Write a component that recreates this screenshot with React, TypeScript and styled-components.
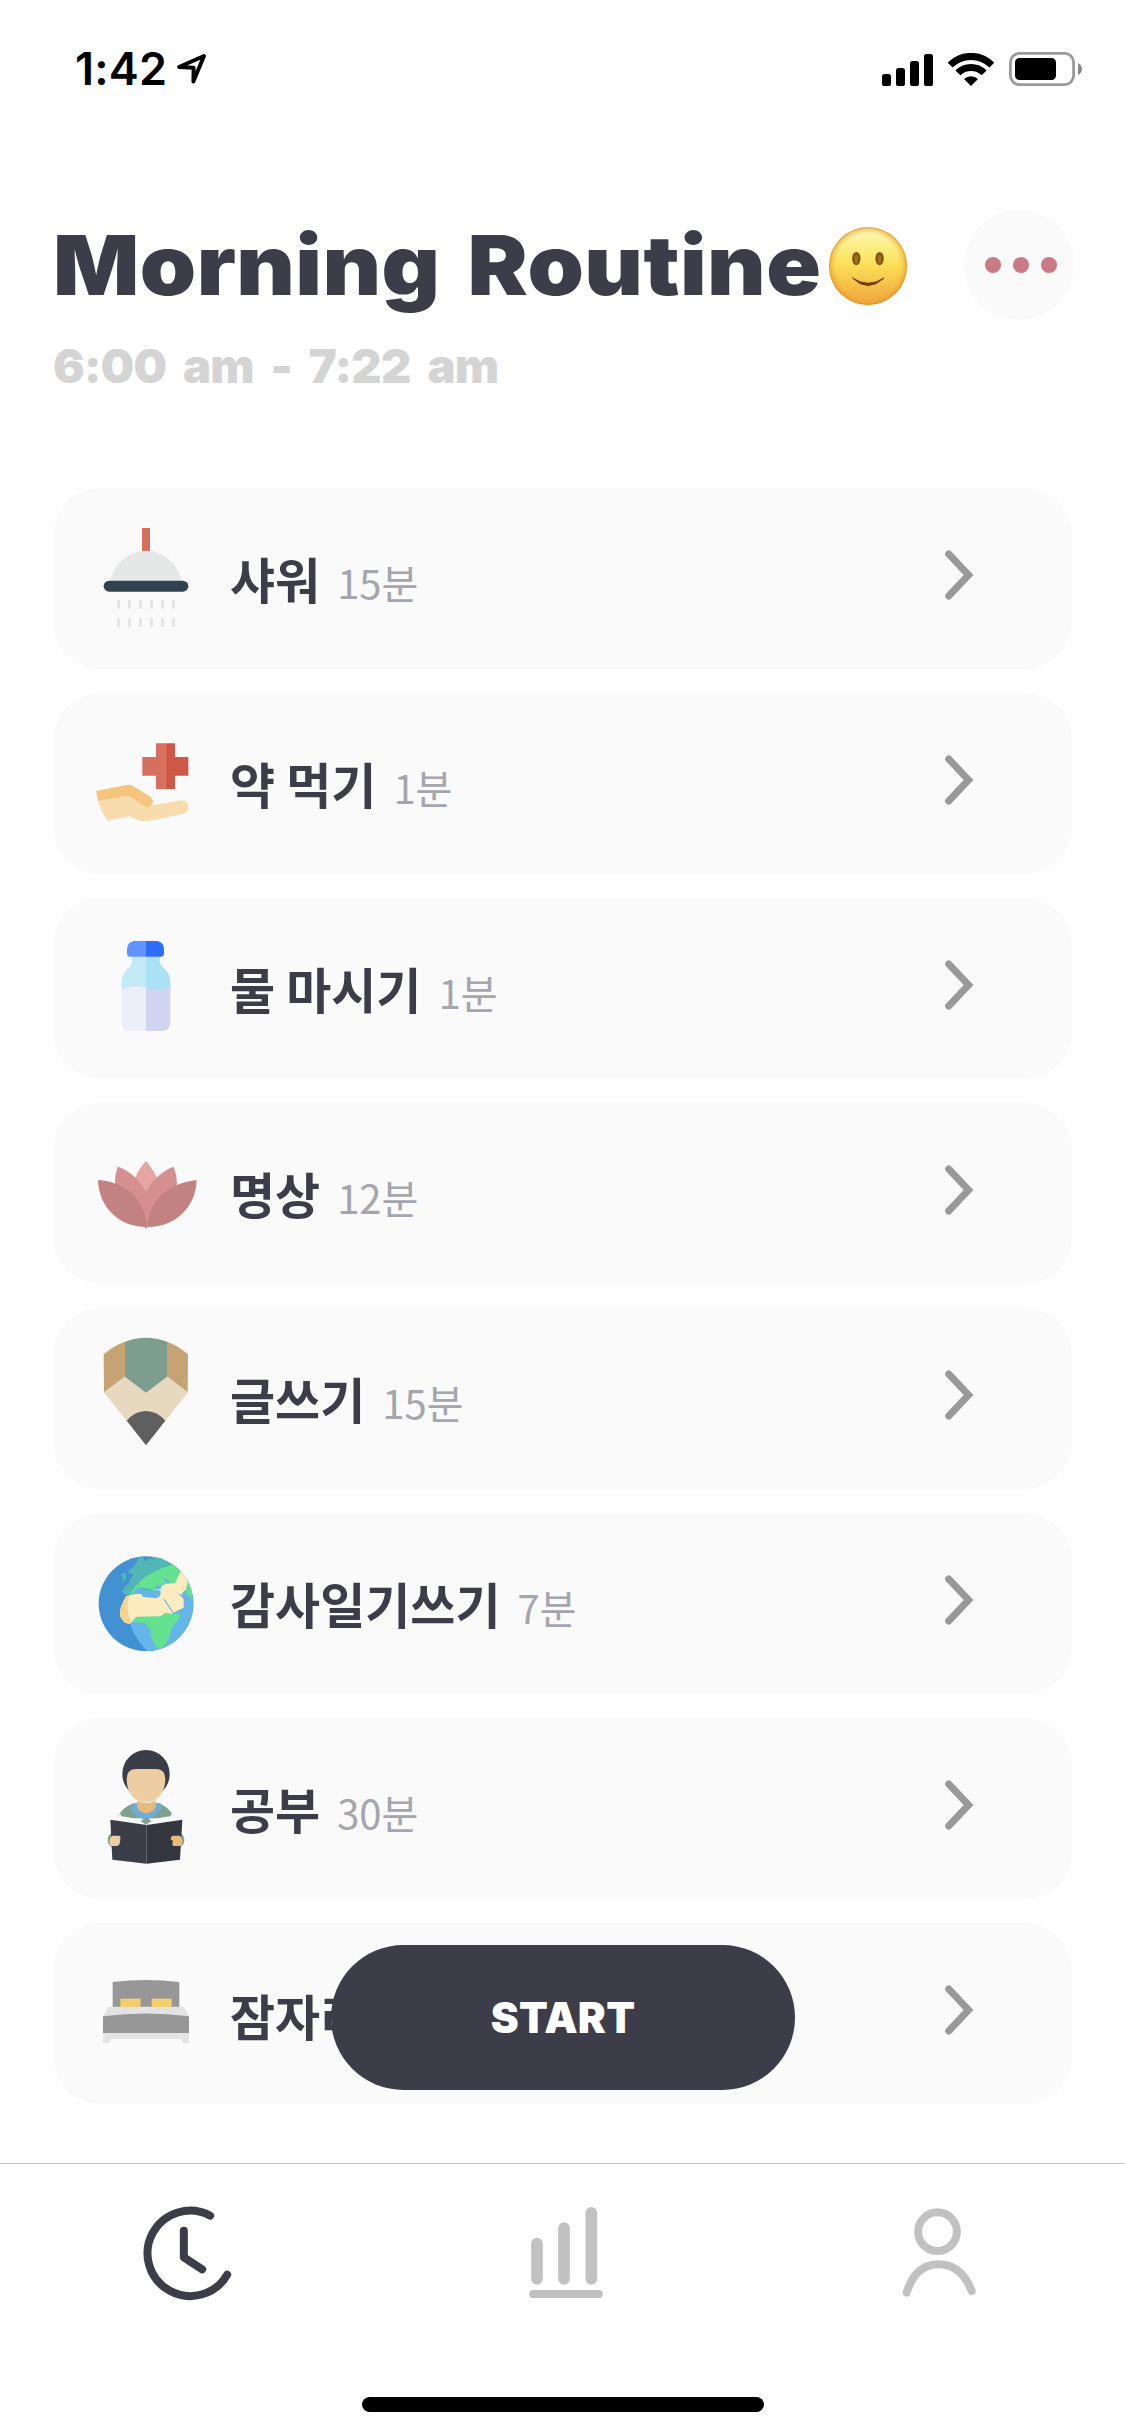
import React from 'react';
import styled, { createGlobalStyle } from 'styled-components';

const ink = '#3c3d49';
const soft = '#c1c1c1';
const panel = '#fafafa';

const GlobalStyle = createGlobalStyle`
  * { box-sizing: border-box; }
  body {
    margin: 0;
    background: #fefefe;
    font-family: Inter, "Noto Sans CJK KR", sans-serif;
  }
  svg { display: block; flex: none; }
`;

const Screen = styled.div`
  width: 1125px;
  height: 2436px;
  display: flex;
  flex-direction: column;
  overflow: hidden;
  color: ${ink};
`;

const StatusBar = styled.header`
  height: 132px;
  flex: none;
  padding: 44px 43px 0 75px;
  display: flex;
  align-items: flex-start;
  justify-content: space-between;
  color: #000;
`;

const StatusGroup = styled.div<{ $gap: number }>`
  display: flex;
  align-items: center;
  height: 50px;
  gap: ${(p) => p.$gap}px;
`;

const Clock = styled.span`
  width: 93px;
  font-size: 45px;
  font-weight: 600;
  line-height: 50px;
  letter-spacing: 0.2px;
  white-space: nowrap;
`;

const Heading = styled.section`
  height: 356px;
  flex: none;
  padding: 78px 51px 0 53px;
`;

const TitleRow = styled.div`
  display: flex;
  align-items: center;
  height: 110px;
`;

const Title = styled.h1`
  margin: 0;
  width: 775px;
  font-size: 83px;
  font-weight: 900;
  line-height: 112px;
  letter-spacing: 0.4px;
  word-spacing: 8px;
  white-space: nowrap;
  transform: scaleX(1.088);
  transform-origin: left center;
`;

const MoreButton = styled.button`
  width: 110px;
  height: 110px;
  margin-left: auto;
  padding: 0 0 0 4px;
  border: 0;
  border-radius: 50%;
  background: ${panel};
  display: flex;
  align-items: center;
  justify-content: center;
  gap: 12px;
`;

const Dot = styled.span`
  width: 16px;
  height: 16px;
  border-radius: 50%;
  background: #c97b85;
`;

const TimeRange = styled.p`
  margin: 18px 0 0;
  font-size: 47px;
  font-weight: 900;
  line-height: 56px;
  letter-spacing: -0.7px;
  word-spacing: 8px;
  color: #d4d4d4;
  white-space: nowrap;
`;

const List = styled.main`
  flex: none;
  height: 1675px;
  padding: 0 53px;
  display: flex;
  flex-direction: column;
  gap: 24px;
  position: relative;
`;

const Card = styled.article`
  height: 181px;
  flex: none;
  padding: 0 98px 0 37px;
  border-radius: 48px;
  background: ${panel};
  display: flex;
  align-items: center;
`;

const Label = styled.div`
  margin-left: 28px;
  padding-top: 2px;
  flex: 1;
  display: flex;
  align-items: baseline;
  gap: 17px;
  font-family: "Noto Sans CJK KR", sans-serif;
  line-height: 70px;
  white-space: nowrap;
`;

const Name = styled.span`
  font-size: 49px;
  font-weight: 700;
`;

const Minutes = styled.span`
  font-size: 40px;
  font-weight: 400;
  color: #a5a5ad;
`;

const StartButton = styled.button`
  position: absolute;
  left: 331px;
  top: 1457px;
  width: 464px;
  height: 145px;
  padding: 0;
  border: 0;
  border-radius: 73px;
  background: ${ink};
  color: #fff;
  font-family: Inter, sans-serif;
  font-size: 42px;
  font-weight: 900;
  letter-spacing: 0.3px;
`;

const TabBar = styled.nav`
  height: 234px;
  flex: none;
  border-top: 1px solid #c6c6c6;
  display: grid;
  grid-template-columns: repeat(3, 1fr);
  justify-items: center;
  padding-top: 26px;
`;

const HomeIndicator = styled.div`
  width: 402px;
  height: 15px;
  flex: none;
  margin: 0 auto;
  border-radius: 8px;
  background: #000;
`;

const LocationArrow = () => (
  <svg width="34" height="36" viewBox="175 51 34 36" fill="none" stroke="#000" strokeWidth="3.9" strokeLinejoin="round">
    <path d="M204 56 L179 67 L193.6 67.8 L193.4 81.5 Z" />
  </svg>
);

const Signal = () => (
  <svg width="51" height="33" viewBox="0 0 51 33">
    <rect x="0" y="21" width="9" height="12" rx="2.6" />
    <rect x="14" y="15" width="9" height="18" rx="2.6" />
    <rect x="28" y="8" width="9" height="25" rx="2.6" />
    <rect x="42" y="1" width="9" height="32" rx="2.6" />
  </svg>
);

const Wifi = () => (
  <svg width="46" height="33" viewBox="0 0 46 33" fill="none" stroke="#000" strokeWidth="7">
    <path d="M2.1 12.1 A29.5 29.5 0 0 1 43.9 12.1" />
    <path d="M9.9 19.9 A18.5 18.5 0 0 1 36.1 19.9" />
    <path d="M16 26 A10 10 0 0 1 30 26 L23 33 Z" fill="#000" stroke="none" />
  </svg>
);

const Battery = () => (
  <svg width="73" height="34" viewBox="0 0 73 34">
    <rect x="1.4" y="1.4" width="63.2" height="31.2" rx="9" fill="none" stroke="#9a9a9a" strokeWidth="2.8" />
    <rect x="6" y="6" width="41" height="22" rx="4.5" />
    <path d="M69 11 Q73 13 73 17 Q73 21 69 23 Z" fill="#8a8a8a" />
  </svg>
);

const Smiley = () => (
  <svg width="80" height="80" viewBox="0 -1 80 80">
    <defs>
      <linearGradient id="faceFill" x1="0" y1="0" x2="0" y2="1">
        <stop offset="0" stopColor="#fff8c8" />
        <stop offset="0.22" stopColor="#fdf08a" />
        <stop offset="0.5" stopColor="#fbde56" />
        <stop offset="0.78" stopColor="#f4bc46" />
        <stop offset="1" stopColor="#efa640" />
      </linearGradient>
      <radialGradient id="faceRim" cx="0.5" cy="0.5" r="0.5">
        <stop offset="0.82" stopColor="#eb9f2c" stopOpacity="0" />
        <stop offset="0.94" stopColor="#ea9f2c" stopOpacity="0.45" />
        <stop offset="1" stopColor="#dc8a20" stopOpacity="0.85" />
      </radialGradient>
    </defs>
    <circle cx="40" cy="40" r="39" fill="url(#faceFill)" />
    <circle cx="40" cy="40" r="39" fill="url(#faceRim)" />
    <ellipse cx="28.3" cy="32.6" rx="4.2" ry="6.7" fill="#80540f" />
    <ellipse cx="51.6" cy="32.6" rx="4.2" ry="6.7" fill="#80540f" />
    <ellipse cx="28.3" cy="33" rx="2" ry="4.6" fill="#a06e1c" />
    <ellipse cx="51.6" cy="33" rx="2" ry="4.6" fill="#a06e1c" />
    <path d="M24.5 52 Q40 67 56 52 Q40 62.5 24.5 52 Z" fill="#6e3d08" stroke="#6e3d08" strokeWidth="1" strokeLinejoin="round" />
  </svg>
);

const Shower = () => (
  <>
    <rect x="306" y="174" width="24" height="69" fill="#d5705e" />
    <path d="M211 333 C222 280 268 242 318 242 C368 242 414 280 425 333 Z" fill="#e6e8e7" />
    <rect x="191" y="332" width="254" height="33" rx="16.5" fill="#304250" />
    {[235, 268, 301, 334, 367, 400].map((x) => (
      <g key={x} fill="#e4e5e5">
        <rect x={x - 4} y="389" width="9" height="27" rx="3" />
        <rect x={x - 4} y="444" width="9" height="27" rx="3" />
      </g>
    ))}
  </>
);

const Medicine = () => (
  <>
    <path d="M348 820 H376 V957 H348 V917 H307 V861 H348 Z" fill="#d5705e" />
    <path d="M376 820 H405 V861 H445 V917 H405 V957 H376 Z" fill="#cd5845" />
    <path d="M174 992 L262 974 L322 1006 Q332 1008 342 1005 L424 991 Q443 990 445 1010 Q445 1027 428 1032 L330 1052 Q306 1057 288 1048 L267 1039 L203 1052 Q184 1028 174 992 Z" fill="#f9dcae" />
    <path d="M168 963 L258 945 Q268 943 278 947 L331 980 Q342 988 338 999 Q331 1013 317 1010 L265 977 L174 993 Z" fill="#f6c57d" />
  </>
);

const Bottle = () => (
  <>
    <path d="M276 199 H318 V300 H245 V270 Q247 252 261 238 Q276 226 276 215 Z" fill="#c4e9f7" />
    <path d="M318 199 H359 V215 Q361 226 375 238 Q391 254 391 275 V302 H318 Z" fill="#aae1f4" />
    <path d="M245 300 Q281 280 318 294 V423 H267 Q245 420 245 398 Z" fill="#eceff9" />
    <path d="M318 294 Q357 308 391 289 V398 Q389 421 367 423 H318 Z" fill="#d0d4ef" />
    <path d="M318 153 H282 Q262 156 261 178 V192 Q262 200 269 200 H318 Z" fill="#6094f8" />
    <path d="M318 153 H352 Q371 156 372 178 V192 Q371 200 364 200 H318 Z" fill="#2e6df8" />
  </>
);

const Lotus = () => (
  <>
    <path d="M318 813 Q336 832 350 862 L332 910 H304 L286 862 Q298 834 318 813 Z" fill="#e5a5a2" />
    <path d="M234 830 Q287 849 318 906 Q348 850 401 830 Q411 855 411 881 L400 940 L320 1008 L240 940 L225 878 Q225 851 234 830 Z" fill="#d48f8e" />
    <path d="M174 870 C253 876 310 920 322 1011 C237 1012 176 951 174 870 Z" fill="#c28281" />
    <path d="M470 870 C391 880 331 920 322 1011 C405 1012 468 951 470 870 Z" fill="#c28281" />
    <path d="M314 1010 H324 L318 1015 Z" fill="#c96f6f" />
  </>
);

const Pencil = () => (
  <>
    <path d="M191 163 Q221 137 255 125 V245 L192 279 Z" fill="#c6a375" />
    <path d="M444 163 Q415 137 381 125 V245 L443 279 Z" fill="#c6a375" />
    <path d="M192 277 L255 229 L318 277 L381 229 L444 277 L376 363 L318 400 L260 363 Z" fill="#e7d8c0" />
    <path d="M255 125 Q318 101 381 125 V230 L318 278 L255 230 Z" fill="#7d9d8f" />
    <path d="M260 362 Q284 334 318 333 Q352 334 376 362 L318 436 Z" fill="#5f5f5f" />
  </>
);

const Globe = () => (
  <g transform="translate(150 660)">
    <defs>
      <clipPath id="globeClip">
        <circle cx="168" cy="251" r="142" />
      </clipPath>
    </defs>
    <g clipPath="url(#globeClip)">
      <rect x="20" y="100" width="300" height="300" fill="#4291d3" />
      <path d="M284 128 C195 135 113 180 113 258 C113 318 140 365 176 396 H330 V128 Z" fill="#66b5e8" />
      <path d="M154 104 L166 124 L178 114 L190 121 L184 104 H260 L273 155 L250 190 L206 210 L160 212 L133 221 L109 226 L96 216 L104 199 L119 188 L118 180 L132 163 L115 159 L118 150 L133 137 Z" fill="#52b6b4" />
      <path d="M92 161 L105 160 L110 171 L106 183 L96 188 L100 176 Z" fill="#52b6b4" />
      <path d="M118 227 Q133 198 165 172 Q218 137 260 132 L284 154 L256 200 L205 210 L193 214 L184 208 L168 205 L157 203 L145 203 L132 218 Z" fill="#65e28f" />
      <path d="M108 229 L139 221 L154 223 L159 231 L201 235 L210 227 L212 213 L196 207 L197 201 L217 196 L231 191 L255 190 L262 175 L274 150 L300 160 L296 184 L290 207 L276 220 L281 240 L281 263 L260 273 L249 280 L180 305 L134 300 L118 312 L103 307 L91 290 Q87 270 98 249 Z" fill="#fcecc0" />
      <path d="M108 229 L120 225 Q111 247 113 271 Q117 296 123 307 L117 312 L103 307 L91 290 Q87 270 98 249 Z" fill="#f8d28f" />
      <path d="M132 214 L143 205 L157 205 L162 214 L174 209 L182 216 L196 214 L211 216 L211 226 L190 231 L174 227 L164 221 L145 220 L132 222 Z" fill="#66b5e8" />
      <path d="M217 168 L222 173 L235 180 L239 190 L226 187 Z" fill="#66b5e8" />
      <path d="M194 199 L212 195 L222 191 L214 199 L212 208 L196 208 Z" fill="#66b5e8" />
      <path d="M218 234 L226 240 L251 278 L264 280 L259 285 L249 281 Z" fill="#66b5e8" />
      <path d="M263 220 L281 227 L310 234 V245 L284 239 Z" fill="#66b5e8" />
      <path d="M294 185 Q306 200 310 229 L303 234 L289 223 L289 200 Z" fill="#65e28f" />
      <path d="M127 302 L139 290 L211 289 L227 278 L247 282 L269 281 L268 296 L244 325 L238 351 L224 377 L211 385 L198 382 L182 348 L182 330 L163 308 L134 306 Z" fill="#65e28f" />
    </g>
  </g>
);

const Reader = () => (
  <>
    <ellipse cx="318" cy="222" rx="71" ry="72" fill="#3b3d48" />
    <path d="M248 264 H260 L268 290 H368 L376 264 H388 V300 H248 Z" fill={panel} />
    <path d="M260 236 Q260 207 289 207 H347 Q376 207 376 236 C376 281 348 307 318 307 C286 307 260 281 260 236 Z" fill="#efcda3" />
    <path d="M276 311 Q244 326 228 355 H406 Q390 326 362 311 Z" fill="#80a18f" />
    <path d="M279 310 L362 310 L363 325 Q349 350 318 361 Q286 351 273 327 Z" fill="#6eaddb" />
    <path d="M291 302 Q318 316 347 302 V322 Q337 339 319 340 Q299 338 291 322 Z" fill="#e9b97a" />
    <path d="M232 350 L240 339 L244 349 Q289 352 317 375 L213 360 L216 349 Z" fill="#f8faf9" />
    <path d="M404 350 L396 339 L391 349 Q345 352 318 375 L424 360 L421 349 Z" fill="#f8faf9" />
    <path d="M319 353 L335 363 L318 374 L302 363 Z" fill="#80a18f" />
    <ellipse cx="219" cy="420" rx="16" ry="21" fill="#80a18f" />
    <ellipse cx="417" cy="420" rx="16" ry="21" fill="#80a18f" />
    <path d="M211 359 L320 375 V491 L217 479 Z" fill="#3b3d48" />
    <path d="M427 359 L320 375 V491 L420 479 Z" fill="#343640" />
    <path d="M216 407 H236 Q243 408 241 416 L239 431 Q237 438 229 438 H212 Q204 420 216 407 Z" fill="#efcda3" />
    <path d="M420 407 H399 Q391 409 393 419 L399 423 L397 431 Q397 438 406 438 H424 Q432 420 420 407 Z" fill="#e9b97a" />
  </>
);

const Bed = () => (
  <>
    <path d="M218 846 Q318 834 418 846 V925 H218 Z" fill="#979797" />
    <path d="M205 920 H431 L447 948 H190 Z" fill="#e3e3e3" />
    <rect x="241" y="896" width="61" height="25" fill="#f2ce70" />
    <rect x="335" y="896" width="60" height="25" fill="#f2ce70" />
    <path d="M189 949 Q318 932 447 949 V1000 H189 Z" fill="#979797" />
    <path d="M189 1000 H447 V1030 H431 L421 1017 H214 L205 1030 H189 Z" fill="#e4e4e4" />
  </>
);

const Chevron = () => (
  <svg width="30" height="58" viewBox="0 0 30 58" fill="none" stroke="#999" strokeWidth="7" strokeLinecap="round">
    <path d="M4.7 4 L24.6 25 L4.7 46" />
  </svg>
);

interface Routine {
  name: string;
  minutes?: string;
  top: number;
  Art: () => React.ReactElement;
}

const routines: Routine[] = [
  { name: '샤워', minutes: '15분', top: 54, Art: Shower },
  { name: '약 먹기', minutes: '1분', top: 669, Art: Medicine },
  { name: '물 마시기', minutes: '1분', top: 24, Art: Bottle },
  { name: '명상', minutes: '12분', top: 639, Art: Lotus },
  { name: '글쓰기', minutes: '15분', top: 24, Art: Pencil },
  { name: '감사일기쓰기', minutes: '7분', top: 639, Art: Globe },
  { name: '공부', minutes: '30분', top: 54, Art: Reader },
  { name: '잠자리', top: 669, Art: Bed },
];

const ClockTab = () => (
  <svg width="120" height="140" viewBox="-7.5 0 360 420" fill="none" stroke={ink} strokeWidth="24" strokeLinecap="round" strokeLinejoin="round">
    <path d="M239 77 A128 128 0 1 0 290 254" />
    <path d="M160 122 V202 L215 238" />
  </svg>
);

const StatsTab = () => (
  <svg width="120" height="140" viewBox="1117.5 0 360 420" fill={soft}>
    <rect x="1202" y="143" width="35" height="141" rx="17.5" />
    <rect x="1283" y="97" width="35" height="187" rx="17.5" />
    <rect x="1365" y="51" width="35" height="233" rx="17.5" />
    <rect x="1196" y="300" width="221" height="24" rx="12" />
  </svg>
);

const ProfileTab = () => (
  <svg width="120" height="140" viewBox="54 0 360 420" fill="none" stroke={soft} strokeWidth="24" strokeLinecap="round">
    <circle cx="232.5" cy="125" r="58" />
    <path d="M140 308 C157 252 190 223 236 223 C285 223 315 252 335 303" />
  </svg>
);

export default function App() {
  return (
    <Screen>
      <GlobalStyle />
      <StatusBar>
        <StatusGroup $gap={7}>
          <Clock>1:42</Clock>
          <LocationArrow />
        </StatusGroup>
        <StatusGroup $gap={15}>
          <Signal />
          <Wifi />
          <Battery />
        </StatusGroup>
      </StatusBar>
      <Heading>
        <TitleRow>
          <Title>Morning Routine</Title>
          <Smiley />
          <MoreButton aria-label="More">
            <Dot />
            <Dot />
            <Dot />
          </MoreButton>
        </TitleRow>
        <TimeRange>6:00 am - 7:22 am</TimeRange>
      </Heading>
      <List>
        {routines.map(({ name, minutes, top, Art }) => (
          <Card key={name}>
            <svg width="112" height="181" viewBox={`150 ${top} 336 543`}>
              <Art />
            </svg>
            <Label>
              <Name>{name}</Name>
              {minutes && <Minutes>{minutes}</Minutes>}
            </Label>
            <Chevron />
          </Card>
        ))}
        <StartButton>START</StartButton>
      </List>
      <TabBar>
        <ClockTab />
        <StatsTab />
        <ProfileTab />
      </TabBar>
      <HomeIndicator />
    </Screen>
  );
}
